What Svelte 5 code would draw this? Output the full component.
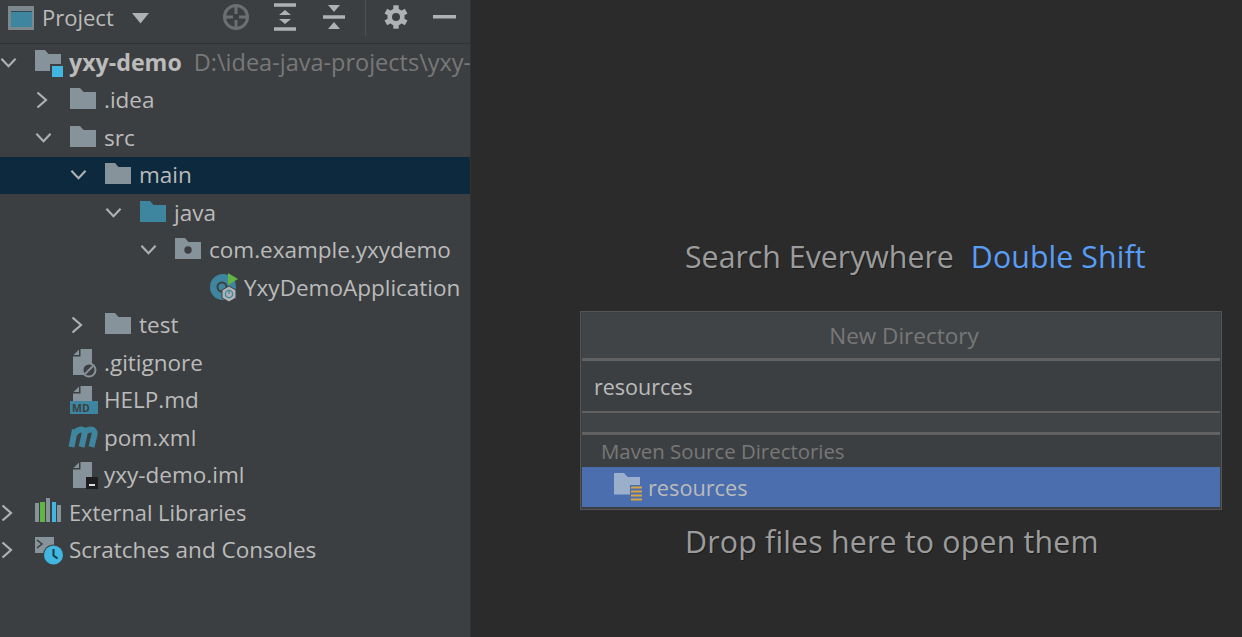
<script>
  const rows = [
    { id: 'module', depth: 0, arrow: 'down', label: 'yxy-demo', path: 'D:\\idea-java-projects\\yxy-demo', bold: true },
    { id: 'folder', depth: 1, arrow: 'right', label: '.idea' },
    { id: 'folder', depth: 1, arrow: 'down', label: 'src' },
    { id: 'folder', depth: 2, arrow: 'down', label: 'main', selected: true },
    { id: 'blue', depth: 3, arrow: 'down', label: 'java' },
    { id: 'package', depth: 4, arrow: 'down', label: 'com.example.yxydemo' },
    { id: 'spring', depth: 5, label: 'YxyDemoApplication' },
    { id: 'folder', depth: 2, arrow: 'right', label: 'test' },
    { id: 'ignore', depth: 1, label: '.gitignore' },
    { id: 'md', depth: 1, label: 'HELP.md' },
    { id: 'maven', depth: 1, label: 'pom.xml' },
    { id: 'iml', depth: 1, label: 'yxy-demo.iml' },
    { id: 'libs', depth: 0, arrow: 'right', label: 'External Libraries', narrow: true },
    { id: 'scratch', depth: 0, arrow: 'right', label: 'Scratches and Consoles' }
  ];
  const teeth = [0, 60, 120, 180, 240, 300];
</script>

{#snippet folder(fill)}
  <path d="M1 1h10l3.500 4H27v17H1z" fill={fill} />
{/snippet}

{#snippet file()}
  <path d="M8.500 1H20v26H1V8.500h7.500zM7 1.500V7H1.500z" fill="#87939a" />
{/snippet}

<div class="ide">
  <aside class="sidebar">
    <header class="toolbar">
      <svg class="window" width="26" height="24" viewBox="0 0 26 24">
        <rect width="26" height="24" fill="#7d888e" />
        <rect x="3" y="6" width="21" height="15" fill="#3e86a0" />
        <rect x="3" y="5" width="21" height="1" fill="#2f4a55" />
      </svg>
      <span class="title">Project</span>
      <svg class="caret" width="18" height="11" viewBox="0 0 18 11"><path d="M0 0h17l-8.500 10.500z" fill="#afb1b3" /></svg>
      <div class="tools">
        <svg width="30" height="30" viewBox="0 0 30 30" class="tool-target">
          <circle cx="15" cy="15" r="11.500" fill="none" stroke="#6c6f71" stroke-width="3" />
          <path d="M15 3v9M15 18v9M3 15h9M18 15h9" stroke="#6c6f71" stroke-width="3" />
        </svg>
        <svg width="24" height="28" viewBox="0 0 24 28" class="tool-expand">
          <path d="M1 2h22M1 26h22" stroke="#afb1b3" stroke-width="3.500" />
          <path d="M12 7l6 5H6zM12 21l6-5H6z" fill="#afb1b3" />
        </svg>
        <svg width="24" height="26" viewBox="0 0 24 26" class="tool-collapse">
          <path d="M1 13h22" stroke="#afb1b3" stroke-width="3.500" />
          <path d="M6 1h12l-6 7zM6 25h12l-6-7z" fill="#afb1b3" />
        </svg>
        <span class="sep"></span>
        <svg width="24" height="24" viewBox="0 0 24 24" class="tool-gear">
          <circle cx="12" cy="12" r="6.300" fill="none" stroke="#afb1b3" stroke-width="4.600" />
          {#each teeth as a}
            <rect x="9.300" y="0.300" width="5.400" height="5" fill="#afb1b3" transform="rotate({a} 12 12)" />
          {/each}
        </svg>
        <svg width="23" height="4" viewBox="0 0 23 4" class="tool-min"><rect width="23" height="3.500" fill="#afb1b3" /></svg>
      </div>
    </header>

    <ul class="tree">
      {#each rows as row}
        <li class="row" class:selected={row.selected} style="--depth: {row.depth}">
          <span class="arrow">
            {#if row.arrow === 'down'}
              <svg width="18" height="12" viewBox="0 0 18 12"><path d="M1.500 1.500L9 9.500l7.500-8" fill="none" stroke="#afb1b3" stroke-width="2.200" /></svg>
            {:else if row.arrow === 'right'}
              <svg class="right" width="12" height="18" viewBox="0 0 12 18"><path d="M1.500 1.500L10 9l-8.500 7.500" fill="none" stroke="#afb1b3" stroke-width="2.200" /></svg>
            {/if}
          </span>
          <svg class="icon" width="30" height="30" viewBox="0 0 30 30">
            {#if row.id === 'folder'}
              <g transform="translate(1 2)">{@render folder('#87939a')}</g>
            {:else if row.id === 'blue'}
              <g transform="translate(1 2)">{@render folder('#3e86a0')}</g>
            {:else if row.id === 'module'}
              <g transform="translate(1 1)">{@render folder('#87939a')}</g>
              <rect x="17" y="16" width="13" height="13" fill="#3c3f41" />
              <rect x="19" y="18" width="11" height="11" fill="#40b6e0" />
            {:else if row.id === 'package'}
              <g transform="translate(1 2)">{@render folder('#87939a')}</g>
              <circle cx="15" cy="15" r="3.700" fill="#3c3f41" />
            {:else if row.id === 'spring'}
              <circle cx="15" cy="14" r="13" fill="#3e86a0" />
              <circle cx="14" cy="14" r="4.500" fill="none" stroke="#3c3f41" stroke-width="2" />
              <path d="M20 0l10 6-10 6z" fill="#62b543" />
              <path d="M21 13l7 4v8l-7 4-7-4v-8z" fill="#afb1b3" stroke="#3c3f41" stroke-width="1" />
              <circle cx="21" cy="21" r="3.600" fill="none" stroke="#3e86a0" stroke-width="1.300" />
              <path d="M21 17.500v3.500" stroke="#3e86a0" stroke-width="1.300" />
            {:else if row.id === 'ignore'}
              <g transform="translate(4 0)">{@render file()}</g>
              <circle cx="21" cy="22" r="6.500" fill="#3c3f41" stroke="#87939a" stroke-width="2" />
              <path d="M17 26l8-8" stroke="#87939a" stroke-width="2" />
            {:else if row.id === 'md'}
              <g transform="translate(4 0)">{@render file()}</g>
              <rect x="2" y="16" width="28" height="13" fill="#3e86a0" />
              <text x="4" y="27" class="md">MD</text>
            {:else if row.id === 'maven'}
              <path d="M3.500 24L7 6.500M6.500 11C10 5 17.500 4.500 16.500 11.500L13.500 24M15.500 11C19 5 27.500 4.500 26.500 11.500L23.500 24" fill="none" stroke="#3e86a0" stroke-width="6" />
            {:else if row.id === 'iml'}
              <g transform="translate(4 1)">{@render file()}</g>
              <rect x="18" y="17" width="12" height="12" fill="#1e1e1e" />
              <rect x="21" y="24" width="6" height="2" fill="#dddddd" />
            {:else if row.id === 'libs'}
              <rect x="2" y="5" width="4" height="19" fill="#87939a" />
              <rect x="7" y="4" width="5" height="20" fill="#62b543" />
              <rect x="13" y="0" width="4" height="24" fill="#87939a" />
              <rect x="19" y="4" width="4" height="20" fill="#40b6e0" />
              <rect x="24" y="7" width="4" height="17" fill="#87939a" />
            {:else if row.id === 'scratch'}
              <path d="M2 2h19v16H2z" fill="#87939a" />
              <path d="M4 5l5 4-5 4" fill="none" stroke="#3c3f41" stroke-width="1.600" />
              <circle cx="20.500" cy="20" r="10.500" fill="#3c3f41" />
              <circle cx="20.500" cy="20" r="9.500" fill="#40b6e0" />
              <path d="M20.500 14v6.500l4 3" fill="none" stroke="#1e3a46" stroke-width="2" />
            {/if}
          </svg>
          <span class="label" class:bold={row.bold} class:narrow={row.narrow}>{row.label}</span>
          {#if row.path}<span class="path">{row.path}</span>{/if}
        </li>
      {/each}
    </ul>
  </aside>

  <main class="editor">
    <div class="hints">
      <p class="hint">Search Everywhere<span class="shortcut">Double Shift</span></p>
      <p class="hint drop">Drop files here to open them</p>
    </div>

    <section class="popup">
      <h2 class="popup-title">New Directory</h2>
      <div class="popup-input">resources</div>
      <div class="popup-gap"></div>
      <div class="popup-section">Maven Source Directories</div>
      <div class="popup-item">
        <svg width="30" height="30" viewBox="0 0 30 30">
          <path d="M1 1h10l3.500 4H27v17.500H1z" fill="#9aafcc" />
          <rect x="17" y="13" width="13" height="16" fill="#4b6eaf" />
          <path d="M18 15.500h11M18 19.500h11M18 23.500h11M18 27.500h11" stroke="#d9a343" stroke-width="2.200" />
        </svg>
        <span>resources</span>
      </div>
    </section>
  </main>
</div>

<style>
  :global(body) {
    margin: 0;
    background: #2b2b2b;
  }

  .ide {
    display: flex;
    width: 1242px;
    height: 637px;
    overflow: hidden;
    font-family: "Open Sans", "Noto Sans", sans-serif;
    font-size: 22.500px;
    color: #bbbbbb;
    background: #2b2b2b;
  }

  .sidebar {
    flex: none;
    width: 470px;
    background: #3c3f41;
    overflow: hidden;
    border-right: 1px solid #323232;
  }

  .toolbar {
    display: flex;
    align-items: center;
    height: 36px;
    padding: 0 0 7px 8px;
    border-bottom: 1px solid #323232;
  }

  .window { flex: none; margin-right: 8px; }
  .title { width: 90px; padding-bottom: 2px; font-size: 22px; }
  .caret { flex: none; }

  .tools {
    display: flex;
    align-items: center;
    margin-left: 71px;
    height: 36px;
  }

  .tools svg { flex: none; margin-top: -2px; }
  .tool-expand { margin-left: 22px; }
  .tool-collapse { margin-left: 25px; }
  .sep { width: 1px; height: 36px; background: #515151; margin-left: 19px; }
  .tool-gear { margin-left: 18px; }
  .tool-min { margin-left: 25px; }

  .tree {
    list-style: none;
    margin: 0;
    padding: 0;
  }

  .row {
    display: flex;
    align-items: center;
    height: 37.500px;
    white-space: nowrap;
    padding-left: calc(var(--depth) * 35px);
  }

  .selected { background: #0d293e; }

  .arrow {
    flex: none;
    width: 33px;
    height: 100%;
    display: flex;
    align-items: center;
    justify-content: center;
    padding-right: 16px;
    box-sizing: border-box;
  }

  .right { margin-left: -3px; }

  .icon { flex: none; margin-right: 6px; overflow: visible; }

  .label { line-height: 1; }
  .narrow { font-size: 21.800px; }
  .bold { font-size: 23.200px; font-weight: 700; }
  .path { margin-left: 12px; font-size: 23.500px; line-height: 1; color: #787878; }

  .md {
    font: 700 10.500px "Open Sans", sans-serif;
    fill: #3c3f41;
  }

  .editor {
    flex: 1;
    position: relative;
  }

  .hints {
    display: flex;
    flex-direction: column;
    gap: 247px;
    padding: 238px 0 0 214px;
    font-size: 30.300px;
    line-height: 38px;
    color: #9c9c9c;
    text-shadow: 1px 1px 0 #1c1c1c;
  }

  .hint { margin: 0; white-space: nowrap; }
  .drop { letter-spacing: 0.200px; }
  .shortcut { margin-left: 17px; letter-spacing: 0.100px; color: #589df6; text-shadow: none; }

  .popup {
    position: absolute;
    left: 109px;
    top: 311px;
    width: 638px;
    border: 1px solid #555555;
    padding: 1px 1px 2px;
    background: #3c3f41;
  }

  .popup-title {
    margin: 0;
    height: 45px;
    padding-left: 6px;
    line-height: 45px;
    text-align: center;
    font-size: 22.500px;
    font-weight: 400;
    color: #787878;
    background: #414446;
    border-bottom: 3px solid #616161;
  }

  .popup-input {
    height: 50px;
    line-height: 52px;
    padding-left: 12px;
    font-size: 21.500px;
    border-bottom: 2px solid #616161;
  }

  .popup-gap {
    height: 19px;
    background: #414446;
    border-bottom: 3px solid #616161;
  }

  .popup-section {
    height: 32px;
    line-height: 32px;
    padding-left: 19px;
    font-size: 20.400px;
    color: #787878;
  }

  .popup-item {
    display: flex;
    align-items: center;
    gap: 5px;
    height: 40px;
    padding-left: 31px;
    font-size: 21.700px;
    background: #4b6eaf;
  }
</style>
